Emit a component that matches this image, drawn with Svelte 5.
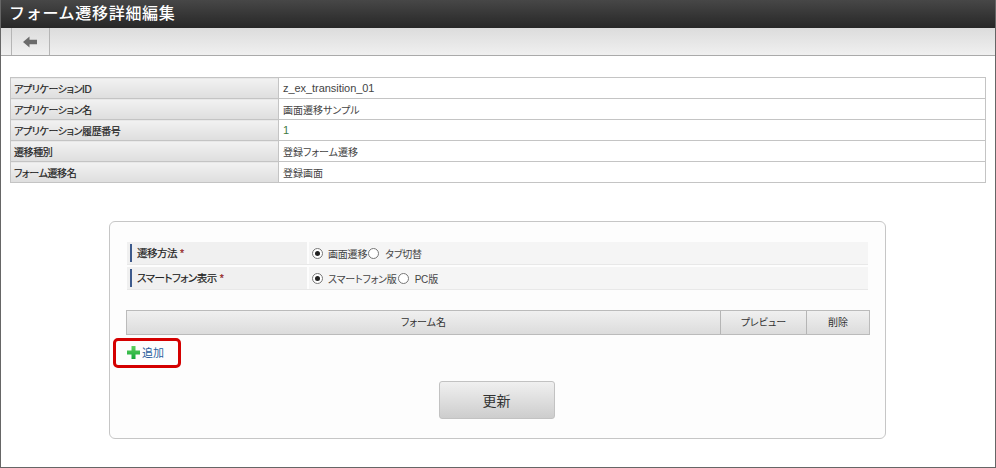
<script lang="ts">
	const infoRows = [
		{ label: 'アプリケーションID', value: 'z_ex_transition_01', latin: true },
		{ label: 'アプリケーション名', value: '画面遷移サンプル' },
		{ label: 'アプリケーション履歴番号', value: '1', green: true, latin: true },
		{ label: '遷移種別', value: '登録フォーム遷移' },
		{ label: 'フォーム遷移名', value: '登録画面' }
	];

	const formRows = [
		{ label: '遷移方法', first: '画面遷移', second: 'タブ切替' },
		{ label: 'スマートフォン表示', first: 'スマートフォン版', second: 'PC版' }
	];
</script>

<div class="window">
	<header class="title">フォーム遷移詳細編集</header>
	<div class="toolbar">
		<button class="back" aria-label="戻る">
			<svg width="14" height="12" viewBox="0 0 14 12">
				<path d="M0 6 L6.5 0.5 V3.8 H14 V8.2 H6.5 V11.5 Z" fill="#6b6b6b" />
			</svg>
		</button>
	</div>

	<main class="content">
		<table class="info">
			<tbody>
				{#each infoRows as row}
					<tr>
						<th>{row.label}</th>
						<td class:green={row.green} class:latin={row.latin}>{row.value}</td>
					</tr>
				{/each}
			</tbody>
		</table>

		<section class="panel">
			<div class="form-rows">
				{#each formRows as row}
					<div class="form-row">
						<div class="form-label">
							<span class="label-text">{row.label}<em>*</em></span>
						</div>
						<div class="form-value">
							<span class="radio checked"></span>
							<span class="radio-text">{row.first}</span>
							<span class="radio"></span>
							<span class="radio-text second">{row.second}</span>
						</div>
					</div>
				{/each}
			</div>

			<div class="grid-head">
				<div class="col-name">フォーム名</div>
				<div class="col-preview">プレビュー</div>
				<div class="col-delete">削除</div>
			</div>

			<div class="add-row">
				<a class="add" href="#add">
					<svg width="13" height="13" viewBox="0 0 13 13">
						<defs>
							<linearGradient id="plus" x1="0" y1="0" x2="0" y2="1">
								<stop offset="0" stop-color="#5ed05e" />
								<stop offset="1" stop-color="#16a83a" />
							</linearGradient>
						</defs>
						<path d="M4.5 0 H8.5 V4.5 H13 V8.5 H8.5 V13 H4.5 V8.5 H0 V4.5 H4.5 Z" fill="url(#plus)" />
					</svg>
					<span>追加</span>
				</a>
				<span class="highlight"></span>
			</div>

			<div class="actions">
				<button class="submit">更新</button>
			</div>
		</section>
	</main>
</div>

<style>
	:global(body) {
		margin: 0;
		background: #fff;
	}

	.window {
		box-sizing: border-box;
		width: 996px;
		height: 468px;
		border: 1px solid #666;
		border-top: 0;
		overflow: hidden;
		font-family: "Liberation Sans", "Noto Sans CJK JP", sans-serif;
		color: #333;
		font-size: 11px;
	}

	.title {
		box-sizing: border-box;
		height: 28px;
		padding: 0 8px;
		line-height: 27px;
		font-size: 16px;
		letter-spacing: 0.7px;
		font-weight: 500;
		color: #fff;
		background: linear-gradient(#474747, #272727);
	}

	.toolbar {
		box-sizing: border-box;
		height: 28px;
		padding-left: 10px;
		display: flex;
		background: linear-gradient(#dcdcdc, #f0f0f0);
		border-bottom: 1px solid #aaa;
	}

	.back {
		width: 39px;
		padding: 0 2px 0 0;
		background: transparent;
		border: 0;
		border-left: 1px solid #b5b5b5;
		border-right: 1px solid #b5b5b5;
		display: flex;
		align-items: center;
		justify-content: center;
	}

	.content {
		padding: 21px 9px 0;
	}

	.info {
		box-sizing: border-box;
		width: 976px;
		border-collapse: collapse;
		table-layout: fixed;
		border: 1px solid #bbb;
	}

	.info th,
	.info td {
		box-sizing: border-box;
		height: 21px;
		padding: 0 3px;
		border: 1px solid #c4c4c4;
		font-size: 10px;
		font-weight: 400;
		font-feature-settings: "palt";
		text-align: left;
		white-space: nowrap;
	}

	.info th {
		width: 268px;
		background: linear-gradient(#f2f2f2, #dedede);
		color: #222;
		-webkit-text-stroke: 0.2px #222;
		letter-spacing: -0.4px;
	}

	.info td {
		padding-left: 4px;
		background: #fff;
		color: #444;
	}

	.info td.latin {
		font-size: 11px;
		letter-spacing: -0.05px;
	}

	.info td.green {
		color: #3f7a3f;
	}

	.panel {
		box-sizing: border-box;
		width: 777px;
		height: 218px;
		margin: 38px 0 0 99px;
		padding: 20px 16px 0;
		background: #fdfdfd;
		border: 1px solid #c6c6c6;
		border-radius: 6px;
	}

	.form-rows {
		display: flex;
		flex-direction: column;
		gap: 2px;
		margin-left: 1px;
		width: 741px;
	}

	.form-row {
		display: flex;
		gap: 2px;
		height: 23px;
		border-bottom: 1px solid #e8e8e8;
		box-sizing: border-box;
	}

	.form-label {
		width: 180px;
		flex-shrink: 0;
		background: #f0f0f0;
		display: flex;
		align-items: center;
		padding-left: 3px;
		box-sizing: border-box;
	}

	.label-text {
		border-left: 2px solid #3d5a8c;
		padding-left: 5px;
		line-height: 18px;
		font-size: 10.5px;
		font-feature-settings: "palt";
		letter-spacing: -0.5px;
		color: #222;
		-webkit-text-stroke: 0.2px #222;
		white-space: nowrap;
	}

	.label-text em {
		color: #d22;
		font-style: normal;
		margin-left: 3px;
	}

	.form-value {
		flex: 1;
		background: #f5f5f5;
		display: flex;
		align-items: center;
		padding-left: 3px;
		font-size: 10px;
		font-feature-settings: "palt";
		letter-spacing: -0.2px;
		color: #444;
	}

	.radio {
		box-sizing: border-box;
		width: 11px;
		height: 11px;
		border: 1px solid #777;
		border-radius: 50%;
		background: #fff;
		display: inline-flex;
		align-items: center;
		justify-content: center;
		flex-shrink: 0;
	}

	.radio.checked::after {
		content: '';
		width: 5px;
		height: 5px;
		border-radius: 50%;
		background: #222;
	}

	.radio-text {
		margin: 0 1px 0 5px;
	}

	.radio-text.second {
		margin-left: 6px;
	}

	.grid-head {
		box-sizing: border-box;
		display: flex;
		width: 744px;
		height: 25px;
		margin-top: 20px;
		border: 1px solid #bbb;
		background: linear-gradient(#f0f0f0, #dcdcdc);
		font-size: 10px;
		font-feature-settings: "palt";
		line-height: 23px;
		text-align: center;
		color: #333;
	}

	.col-name {
		flex: 1;
	}

	.col-preview {
		box-sizing: border-box;
		width: 86px;
		border-left: 1px solid #b5b5b5;
	}

	.col-delete {
		box-sizing: border-box;
		width: 63px;
		border-left: 1px solid #b5b5b5;
	}

	.add-row {
		position: relative;
		height: 46px;
		padding: 9px 0 0 1px;
		box-sizing: border-box;
	}

	.add {
		display: inline-flex;
		align-items: center;
		gap: 2px;
		color: #2a5f9e;
		font-size: 11px;
		text-decoration: none;
	}

	.highlight {
		position: absolute;
		left: -13px;
		top: 3px;
		width: 68px;
		height: 30px;
		box-sizing: border-box;
		border: 3px solid #d40000;
		border-radius: 5px;
	}

	.actions {
		display: flex;
		justify-content: center;
		padding-right: 2px;
	}

	.submit {
		box-sizing: border-box;
		width: 116px;
		height: 38px;
		background: linear-gradient(#f0f0f0, #cdcdcd);
		border: 1px solid #c2c2c2;
		border-radius: 3px;
		font-family: inherit;
		font-size: 14px;
		color: #333;
	}
</style>
